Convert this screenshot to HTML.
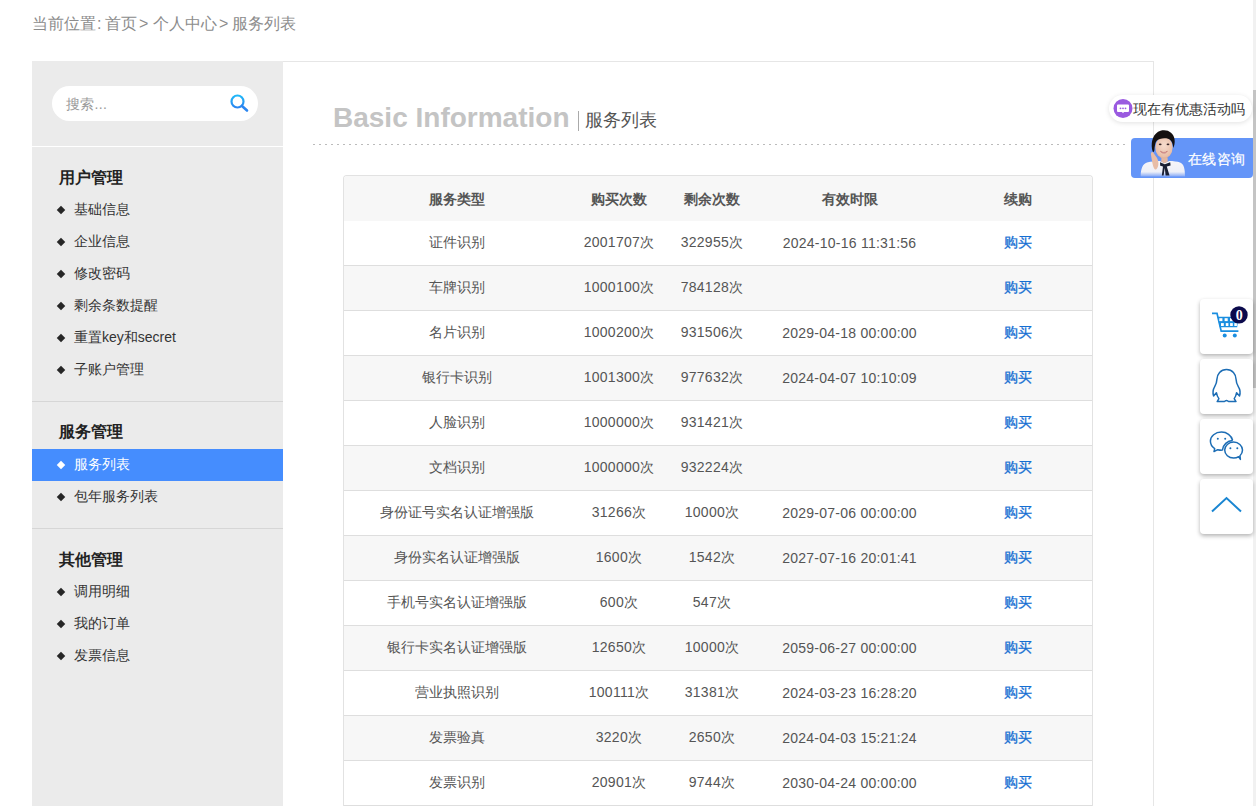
<!DOCTYPE html>
<html><head><meta charset="utf-8">
<style>
*{margin:0;padding:0;box-sizing:border-box}
html,body{width:1256px;height:806px;overflow:hidden;background:#fff;font-family:"Liberation Sans",sans-serif;}
.abs{position:absolute}
.crumb{top:13px;font-size:16px;line-height:22px;color:#8c8c8c;white-space:nowrap}
#side{left:32px;top:61px;width:251px;height:760px;background:#ebebeb}
#search{left:20px;top:25px;width:206px;height:35px;border-radius:18px;background:#fff}
#search span{position:absolute;left:14px;top:8px;font-size:14px;line-height:20px;color:#9a9a9a;letter-spacing:.3px}
.hline{position:absolute;left:0;width:251px;height:1px}
.shead{position:absolute;left:27px;font-size:16px;font-weight:bold;color:#222;line-height:20px;white-space:nowrap}
.sitem{position:absolute;left:0;width:251px;height:32px;font-size:14px;color:#333;line-height:32px;white-space:nowrap}
.sitem i{position:absolute;left:26px;top:15px;width:6px;height:6px;background:#262626;transform:rotate(45deg)}
.sitem b{position:absolute;left:42px;top:1px;font-weight:normal}
.sitem.on{background:#458dfe;color:#fff}
.sitem.on i{background:#fff}
#panel{left:283px;top:61px;width:871px;height:760px;border-top:1px solid #e6e6e6;border-right:1px solid #e6e6e6;background:#fff}
#title{left:333px;top:100px;font-size:28px;font-weight:bold;color:#c4c4c4;line-height:36px;white-space:nowrap}
#vbar{left:578px;top:111px;width:1px;height:20px;background:#aaa}
#sub{left:585px;top:108px;font-size:18px;color:#555;line-height:24px;white-space:nowrap}
#dots{left:313px;top:144px;width:812px;height:1px;background:repeating-linear-gradient(90deg,#bbb 0,#bbb 2px,transparent 2px,transparent 6px)}
#tbl{left:343px;top:175px;width:750px;border:1px solid #e2e2e2;border-bottom:none;border-radius:4px 4px 0 0;overflow:hidden}
table{border-collapse:separate;border-spacing:0;table-layout:fixed;width:748px}
td,th{height:45px;text-align:center;font-size:14px;color:#555;white-space:nowrap;padding:0}
td:nth-child(2),td:nth-child(3),td:nth-child(4){letter-spacing:.25px}
th{background:#f7f7f7;height:45px;font-weight:bold;padding-top:3px}
tr.r td{border-bottom:1px solid #dedede;height:45px}
tr.r:nth-child(odd) td{background:#f7f7f7}
td a{color:#146ed2;text-decoration:none;-webkit-text-stroke:.3px #146ed2}
.fbox{left:1200px;width:53px;height:55px;background:#fff;border-radius:4px;box-shadow:0 2px 4px rgba(0,0,0,.3)}
.fbox svg{display:block}
</style></head><body>
<div class="abs crumb" style="left:32px">当前位置</div>
<div class="abs crumb" style="left:97px">:</div>
<div class="abs crumb" style="left:105px">首页</div>
<div class="abs crumb" style="left:139px">&gt;</div>
<div class="abs crumb" style="left:153px">个人中心</div>
<div class="abs crumb" style="left:219px">&gt;</div>
<div class="abs crumb" style="left:232px">服务列表</div>

<div id="side" class="abs">
  <div id="search" class="abs"><span>搜索...</span>
    <svg style="position:absolute;left:177px;top:8px" width="20" height="20" viewBox="0 0 20 20"><defs><linearGradient id="sg" x1="0" y1="0" x2="0" y2="1"><stop offset="0" stop-color="#20b8f8"/><stop offset="1" stop-color="#2b86f0"/></linearGradient></defs><circle cx="8.5" cy="7.5" r="6" fill="none" stroke="url(#sg)" stroke-width="2.2"/><line x1="13" y1="12" x2="18" y2="16.5" stroke="#2b86f0" stroke-width="2.6" stroke-linecap="round"/></svg>
  </div>
  <div class="hline" style="top:85px;background:#fff"></div>
  <div class="shead" style="top:107px">用户管理</div>
  <div class="sitem" style="top:131px"><i></i><b>基础信息</b></div>
  <div class="sitem" style="top:163px"><i></i><b>企业信息</b></div>
  <div class="sitem" style="top:195px"><i></i><b>修改密码</b></div>
  <div class="sitem" style="top:227px"><i></i><b>剩余条数提醒</b></div>
  <div class="sitem" style="top:259px"><i></i><b>重置key和secret</b></div>
  <div class="sitem" style="top:291px"><i></i><b>子账户管理</b></div>
  <div class="hline" style="top:340px;background:#d6d6d6"></div>
  <div class="shead" style="top:361px">服务管理</div>
  <div class="sitem on" style="top:388px"><i style="top:13px"></i><b style="top:-1px">服务列表</b></div>
  <div class="sitem" style="top:418px"><i></i><b>包年服务列表</b></div>
  <div class="hline" style="top:467px;background:#d6d6d6"></div>
  <div class="shead" style="top:489px">其他管理</div>
  <div class="sitem" style="top:513px"><i></i><b>调用明细</b></div>
  <div class="sitem" style="top:545px"><i></i><b>我的订单</b></div>
  <div class="sitem" style="top:577px"><i></i><b>发票信息</b></div>
</div>

<div id="panel" class="abs"></div>
<div id="title" class="abs">Basic Information</div>
<div id="vbar" class="abs"></div>
<div id="sub" class="abs">服务列表</div>
<div id="dots" class="abs"></div>

<div id="tbl" class="abs">
<table>
<colgroup><col style="width:226px"><col style="width:98px"><col style="width:88px"><col style="width:187px"><col style="width:149px"></colgroup>
<tr><th>服务类型</th><th>购买次数</th><th>剩余次数</th><th>有效时限</th><th>续购</th></tr>
<tr class="r"><td>证件识别</td><td>2001707次</td><td>322955次</td><td>2024-10-16 11:31:56</td><td><a>购买</a></td></tr>
<tr class="r"><td>车牌识别</td><td>1000100次</td><td>784128次</td><td></td><td><a>购买</a></td></tr>
<tr class="r"><td>名片识别</td><td>1000200次</td><td>931506次</td><td>2029-04-18 00:00:00</td><td><a>购买</a></td></tr>
<tr class="r"><td>银行卡识别</td><td>1001300次</td><td>977632次</td><td>2024-04-07 10:10:09</td><td><a>购买</a></td></tr>
<tr class="r"><td>人脸识别</td><td>1000000次</td><td>931421次</td><td></td><td><a>购买</a></td></tr>
<tr class="r"><td>文档识别</td><td>1000000次</td><td>932224次</td><td></td><td><a>购买</a></td></tr>
<tr class="r"><td>身份证号实名认证增强版</td><td>31266次</td><td>10000次</td><td>2029-07-06 00:00:00</td><td><a>购买</a></td></tr>
<tr class="r"><td>身份实名认证增强版</td><td>1600次</td><td>1542次</td><td>2027-07-16 20:01:41</td><td><a>购买</a></td></tr>
<tr class="r"><td>手机号实名认证增强版</td><td>600次</td><td>547次</td><td></td><td><a>购买</a></td></tr>
<tr class="r"><td>银行卡实名认证增强版</td><td>12650次</td><td>10000次</td><td>2059-06-27 00:00:00</td><td><a>购买</a></td></tr>
<tr class="r"><td>营业执照识别</td><td>100111次</td><td>31381次</td><td>2024-03-23 16:28:20</td><td><a>购买</a></td></tr>
<tr class="r"><td>发票验真</td><td>3220次</td><td>2650次</td><td>2024-04-03 15:21:24</td><td><a>购买</a></td></tr>
<tr class="r"><td>发票识别</td><td>20901次</td><td>9744次</td><td>2030-04-24 00:00:00</td><td><a>购买</a></td></tr>
</table>
</div>

<!-- RIGHT FLOAT -->
<div class="abs" style="left:1253px;top:0;width:3px;height:806px;background:#f1f1f1"></div>
<div class="abs" style="left:1253px;top:90px;width:3px;height:298px;background:#c4c4c4"></div>
<div class="abs" style="left:1109px;top:95px;width:143px;height:27px;border-radius:14px;background:#fff;box-shadow:0 1px 5px rgba(0,0,0,.12)"></div>
<svg class="abs" style="left:1113px;top:98px" width="20" height="21" viewBox="0 0 20 21"><circle cx="10" cy="10.5" r="9.5" fill="#9a5ae0"/><path d="M5 6.5h10a1 1 0 0 1 1 1v5.5a1 1 0 0 1-1 1h-4l-1 1.3-1-1.3h-4a1 1 0 0 1-1-1v-5.5a1 1 0 0 1 1-1z" fill="#fff"/><circle cx="7.5" cy="10.3" r=".9" fill="#9a5ae0"/><circle cx="10" cy="10.3" r=".9" fill="#9a5ae0"/><circle cx="12.5" cy="10.3" r=".9" fill="#9a5ae0"/></svg>
<div class="abs" style="left:1133px;top:99px;font-size:14px;line-height:20px;color:#333;white-space:nowrap">现在有优惠活动吗</div>
<div class="abs" style="left:1131px;top:138px;width:122px;height:40px;border-radius:4px 0 4px 4px;background:#6495f8"></div>
<div class="abs" style="left:1188px;top:149px;font-size:14px;line-height:20px;color:#fff;white-space:nowrap;letter-spacing:.4px;-webkit-text-stroke:.2px #fff">在线咨询</div>
<svg class="abs" style="left:1138px;top:128px" width="50" height="50" viewBox="0 0 50 50">
<defs><linearGradient id="shirt" x1="0" y1="0" x2="0" y2="1"><stop offset="0" stop-color="#f7f5f8"/><stop offset=".7" stop-color="#eef0f8"/><stop offset="1" stop-color="#86a9f6"/></linearGradient>
<radialGradient id="skin" cx=".5" cy=".4" r=".65"><stop offset="0" stop-color="#f6dccd"/><stop offset=".8" stop-color="#e9bfa8"/><stop offset="1" stop-color="#d9a58c"/></radialGradient></defs>
<path d="M2.7 48.5C2.7 41 4.5 36 9 34.5C13 33.5 18 33 21.5 33L26.5 35L31.5 33C35 33 39.5 33.5 42 34.5C46 36 47 41 47 48.5Z" fill="url(#shirt)"/>
<path d="M23.5 29.5L29.5 29.5L29.8 33.5L26.5 35.5L23.2 33.5Z" fill="#e2b7a2"/>
<path d="M20.8 33L26.5 35.8L32.8 33L33.2 35L26.5 37L20.5 35Z" fill="#fafafa"/>
<path d="M22 34.3L26.8 36.2L32.2 34.3L32.6 37.6L28.8 38.6L31.5 47.6L27.6 47.6L26.8 40L25.6 47.6L23.8 47.6L25 38.6L22.2 37.8Z" fill="#1a1f33"/>
<ellipse cx="26" cy="19.5" rx="8.6" ry="10.8" fill="url(#skin)"/>
<path d="M14 21C12.8 13 15.5 5 22.5 2.8C29.5 1 35.5 4.5 36.6 11.5C37 15 36.3 18 35.2 20C35 15.5 33.5 12 30 10.8C26 9.8 21 10.5 18.5 13C17 15 16.6 19 16.4 22C16.2 24 15.2 24.5 14.7 23.5Z" fill="#141010"/>
<path d="M13 27C12.6 25 13.4 23.5 14.6 24C15.8 24.8 16.8 27 18 28.5C19.5 30.5 20.8 33 20.3 37C19.8 40 18.5 42 17 41.5C15.5 40.5 14.8 37 14.2 34C13.7 31.5 13.3 29 13 27Z" fill="#e8bda6"/>
<g fill="#3a2828"><ellipse cx="22.2" cy="16.4" rx="1.4" ry=".8"/><ellipse cx="30" cy="16.4" rx="1.4" ry=".8"/></g>
<path d="M22.5 23.2C24 24.8 27.5 25 29.3 23.2C28 25.8 24 25.8 22.5 23.2Z" fill="#fff" stroke="#b86060" stroke-width=".6"/>
</svg>
<div class="abs fbox" style="top:299px"><svg width="53" height="55" viewBox="0 0 53 55"><path d="M12 14.3h5l4.2 17.9h17.2" fill="none" stroke="#1a8ee0" stroke-width="1.7"/><path d="M17.6 17.8h20.8l-1.2 10.4h-17.4z" fill="#1a8ee0"/><g fill="#fff"><rect x="19.3" y="19.2" width="3.1" height="2.9"/><rect x="24.6" y="19.2" width="3.1" height="2.9"/><rect x="30" y="19.2" width="3.1" height="2.9"/><rect x="35" y="19.2" width="2.6" height="2.9"/><rect x="21" y="24.1" width="2.8" height="2.9"/><rect x="25.8" y="24.1" width="2.6" height="2.9"/><rect x="30.1" y="24.1" width="2.7" height="2.9"/><rect x="34.3" y="24.1" width="2.6" height="2.9"/></g><circle cx="24.7" cy="36.4" r="2" fill="#1a8ee0"/><circle cx="34.8" cy="36.4" r="2" fill="#1a8ee0"/><circle cx="39" cy="15.9" r="8.7" fill="#0b0a4c"/><text x="39.2" y="20.6" text-anchor="middle" font-family="Liberation Serif" font-weight="bold" font-size="14" fill="#fff">0</text></svg></div>
<div class="abs fbox" style="top:359px"><svg width="53" height="55" viewBox="0 0 53 55"><path d="M26.5 10.6C20.6 10.6 17.1 14.9 16.9 20.4C16.8 23.4 16.3 25 14.7 27.6C12.9 30.6 12.6 34 13.6 36.9L16.4 33.7C16.8 36 17.6 38 18.9 39.6L17.2 42.6H24C25 42.1 25.8 41.6 26.5 41.6C27.2 41.6 28 42.1 29 42.6H36L34.2 39.6C35.5 38 36.2 36 36.6 33.7L39.5 36.9C40.5 34 40.2 30.6 38.3 27.6C36.7 25 36.2 23.4 36.1 20.4C35.9 14.9 32.4 10.6 26.5 10.6Z" fill="none" stroke="#1c6db5" stroke-width="1.5" stroke-linejoin="round"/></svg></div>
<div class="abs fbox" style="top:419px"><svg width="53" height="55" viewBox="0 0 53 55"><path d="M32.6 21.2C31.3 16.4 26.8 13.1 21.5 13.1C15.3 13.1 10.4 17.1 10.4 22C10.4 25.2 12.1 27.9 14.7 29.6L14 32.6L17.7 30.7C19 31 20.4 31.2 21.9 31.2" fill="none" stroke="#1c6db5" stroke-width="1.5" stroke-linejoin="round"/><path d="M22.3 31.6C22.8 25.7 27.5 21.7 32.8 21.6" fill="none" stroke="#1c6db5" stroke-width="1.5"/><path d="M38.6 37.7C37.1 38.7 35.4 39.1 33.6 39.1C28.7 39.1 24.7 35.5 24.7 31.1C24.7 26.7 28.7 23.1 33.6 23.1C38.5 23.1 42.5 26.7 42.5 31.1C42.5 33.3 41.6 35.3 40 36.8L40.4 40.4Z" fill="none" stroke="#1c6db5" stroke-width="1.5" stroke-linejoin="round"/><g fill="#1c6db5"><circle cx="17.8" cy="19.8" r="1"/><circle cx="25.2" cy="19.8" r="1"/><circle cx="30.4" cy="29.3" r="1"/><circle cx="37.3" cy="29.3" r="1"/></g></svg></div>
<div class="abs fbox" style="top:479px"><svg width="53" height="55" viewBox="0 0 53 55"><path d="M12 32.5l14.5-13.5 14.5 13.5" fill="none" stroke="#1a86d2" stroke-width="2"/></svg></div>

</body></html>
